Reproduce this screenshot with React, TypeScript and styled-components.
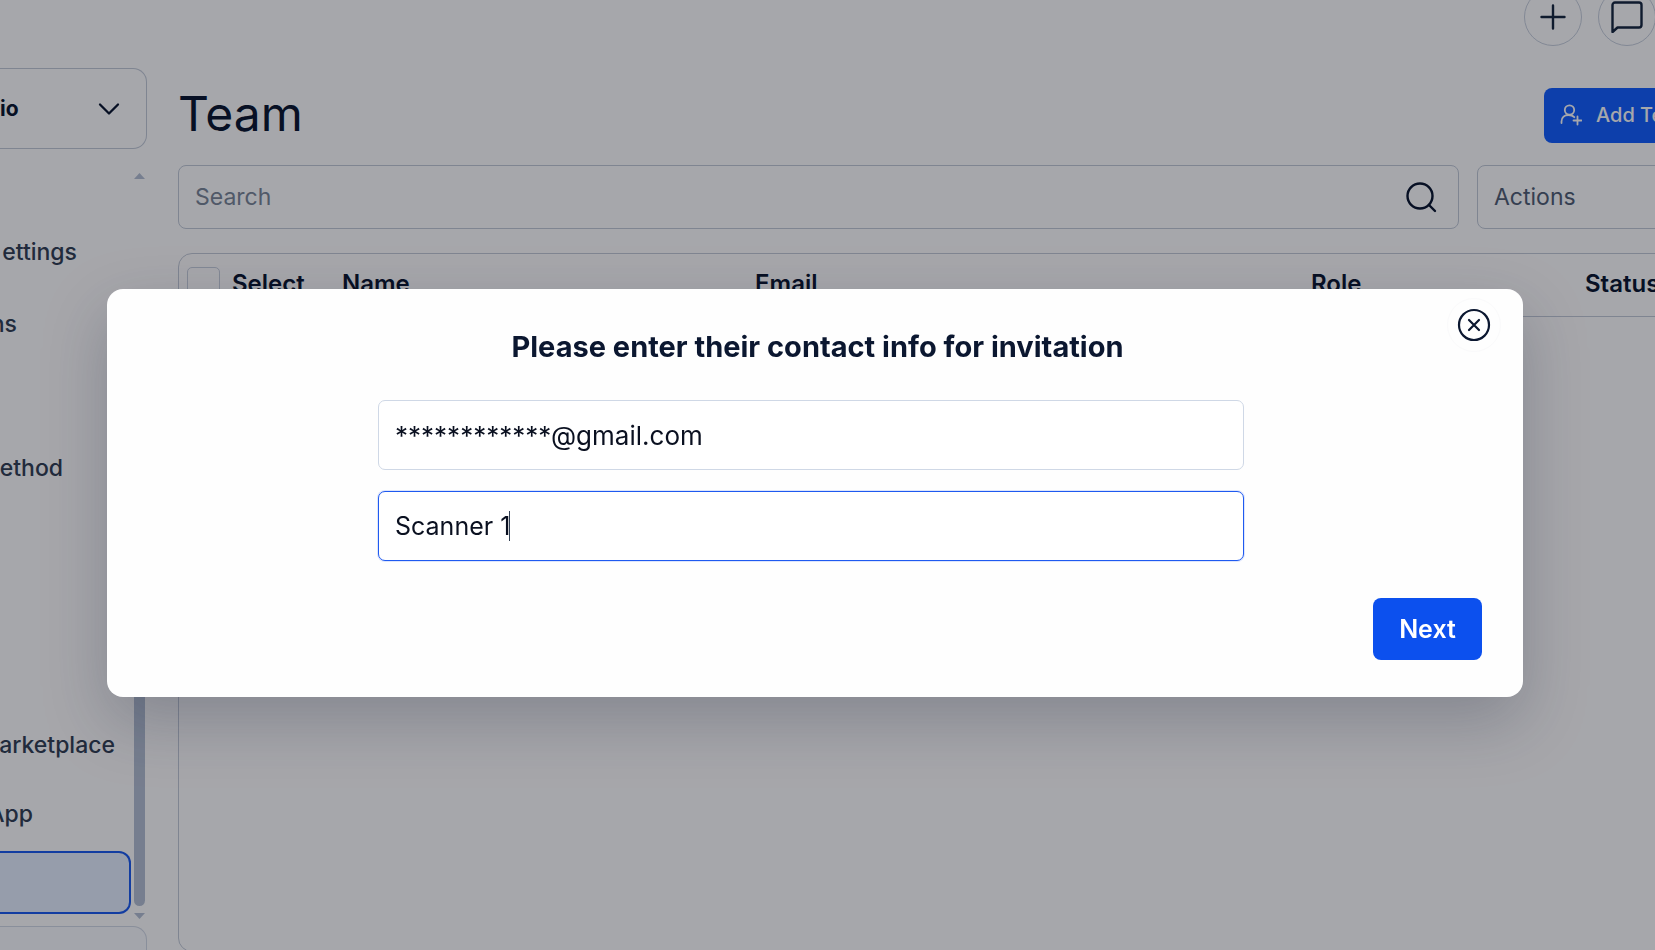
import React, { useState } from "react";
import styled, { createGlobalStyle } from "styled-components";

const GlobalStyle = createGlobalStyle`
  * { box-sizing: border-box; }
  body {
    margin: 0;
    overflow: hidden;
    background: #ffffff;
    color: #0b1730;
    font-family: Inter, "Liberation Sans", sans-serif;
  }
  button, input, select { font: inherit; color: inherit; }
`;

const Page = styled.div`
  display: flex;
  gap: 31px;
  height: 100vh;
  overflow: hidden;
`;

const Sidebar = styled.aside`
  flex: none;
  display: flex;
  flex-direction: column;
  width: 147px;
  padding-top: 68px;
`;

const AccountButton = styled.button`
  flex: none;
  display: flex;
  align-items: center;
  justify-content: space-between;
  height: 81px;
  padding: 0 26px 0 0;
  border: 1px solid #c3cbd8;
  border-width: 1px 1px 1px 0;
  border-radius: 0 14px 14px 0;
  background: transparent;
  font-size: 21px;
  font-weight: 700;
`;

const NavArea = styled.div`
  flex: 1;
  display: flex;
  min-height: 0;
  justify-content: space-between;
  padding: 24px 2px 7px 0;
`;

const Nav = styled.nav`
  width: 131px;
  padding-top: 43px;
`;

const NavGroup = styled.div<{ $row: number }>`
  display: grid;
  grid-auto-rows: ${(p) => p.$row}px;
  align-items: center;
  margin-bottom: -1px;
`;

const NavLink = styled.a<{ $end: number }>`
  display: flex;
  justify-content: flex-end;
  width: ${(p) => p.$end}px;
  color: #334155;
  font-size: 23px;
  font-weight: 500;
  text-decoration: none;
`;

const ActiveLink = styled.a`
  display: block;
  height: 63px;
  border: 2px solid #1d5cf0;
  border-left: 0;
  border-radius: 0 12px 12px 0;
  background: #e6f0ff;
`;

const ScrollTrack = styled.div`
  display: flex;
  flex-direction: column;
  align-items: center;
  gap: 7px;
  width: 11px;
`;

const ScrollThumb = styled.div`
  flex: 1;
  width: 11px;
  margin-top: 220px;
  border-radius: 6px;
  background: #b5c1d4;
`;

const SidebarFooter = styled.div`
  flex: none;
  height: 24px;
  border: 1px solid #d3dae6;
  border-width: 1px 1px 0 0;
  border-radius: 0 14px 0 0;
  background: #fbfcff;
`;

const Main = styled.main`
  flex: 1;
  display: flex;
  flex-direction: column;
  min-width: 0;
`;

const TopBar = styled.div`
  flex: none;
  display: flex;
  justify-content: flex-end;
  align-items: flex-end;
  gap: 16px;
  height: 46px;
  margin-right: -1px;
`;

const RoundButton = styled.button`
  display: grid;
  place-items: center;
  width: 58px;
  height: 58px;
  padding: 0;
  border: 1px solid #c8d0dd;
  border-radius: 50%;
  background: transparent;
  color: #182840;
`;

const HeadingRow = styled.div`
  display: flex;
  justify-content: space-between;
  align-items: center;
  margin: 42px -48px 22px 0;
`;

const Heading = styled.h1`
  margin: 0;
  padding-bottom: 3px;
  font-size: 48px;
  line-height: 52px;
  font-weight: 400;
`;

const AddButton = styled.button`
  display: flex;
  align-items: center;
  gap: 14px;
  width: 159px;
  height: 55px;
  padding: 0 16px 2px;
  border: 0;
  border-radius: 8px;
  background: #1560ff;
  color: #ffffff;
  font-size: 20px;
  font-weight: 500;
  white-space: nowrap;
`;

const FilterRow = styled.div`
  display: flex;
  gap: 18px;
  margin: 0 -48px 24px 0;
`;

const SearchBox = styled.label`
  flex: 1;
  display: flex;
  align-items: center;
  height: 64px;
  padding: 0 20px 0 16px;
  border: 1px solid #c3cbd8;
  border-radius: 8px;
`;

const SearchInput = styled.input`
  flex: 1;
  min-width: 0;
  padding: 0;
  border: 0;
  outline: 0;
  background: transparent;
  font-size: 23px;
  &::placeholder { color: #7b8799; opacity: 1; }
`;

const ActionsSelect = styled.select`
  appearance: none;
  width: 226px;
  height: 64px;
  padding: 0 16px;
  border: 1px solid #c3cbd8;
  border-radius: 8px;
  background: transparent;
  color: #526075;
  font-size: 23px;
`;

const TableCard = styled.div`
  flex: 1;
  margin: 0 -48px -2px 0;
  border: 1px solid #c3cbd8;
  border-radius: 14px;
`;

const Table = styled.table`
  width: 100%;
  table-layout: fixed;
  border-collapse: collapse;
`;

const Th = styled.th<{ $w?: number }>`
  width: ${(p) => (p.$w ? `${p.$w}px` : "auto")};
  height: 62px;
  padding: 0 0 3px;
  border-bottom: 1px solid #c3cbd8;
  text-align: left;
  font-size: 24px;
  font-weight: 600;
`;

const SelectAll = styled.label`
  display: flex;
  align-items: center;
  gap: 12px;
  padding-left: 8px;
`;

const Checkbox = styled.input`
  appearance: none;
  width: 33px;
  height: 33px;
  margin: 0;
  border: 1px solid #c8d0dd;
  border-radius: 5px;
`;

const Overlay = styled.div`
  position: fixed;
  inset: 0;
  display: flex;
  align-items: flex-start;
  padding: 289px 132px 0 107px;
  background: rgba(0, 4, 14, 0.35);
`;

const Dialog = styled.section`
  position: relative;
  flex: 1;
  display: flex;
  flex-direction: column;
  align-items: center;
  padding: 38px 41px 36px;
  border-radius: 16px;
  background: #fefefe;
  box-shadow: 0 24px 64px rgba(30, 41, 59, 0.25);
`;

const DialogTitle = styled.h2`
  margin: 0 0 33px 5px;
  font-size: 29px;
  line-height: 40px;
  font-weight: 700;
`;

const Field = styled.div`
  position: relative;
  width: 65%;
  max-width: 866px;
  margin: 0 8px 21px 0;
`;

const FieldInput = styled.input<{ $active?: boolean; $size: number }>`
  display: block;
  width: 100%;
  height: 70px;
  padding: 0 16px;
  border: 1px solid ${(p) => (p.$active ? "#1f5af0" : "#cfd8e6")};
  border-radius: 7px;
  outline: 0;
  background: #ffffff;
  box-shadow: ${(p) => (p.$active ? "0 0 0 1px rgba(31, 90, 240, 0.15)" : "none")};
  font-size: ${(p) => p.$size}px;
  color: #0a1020;
`;

const Caret = styled.span`
  position: absolute;
  top: 20px;
  left: 131px;
  width: 1px;
  height: 30px;
  background: #334155;
`;

const NextButton = styled.button`
  align-self: flex-end;
  width: 109px;
  height: 62px;
  margin: 16px 0 1px;
  padding: 0;
  border: 0;
  border-radius: 8px;
  background: #0c50ee;
  color: #ffffff;
  font-size: 25px;
  font-weight: 600;
`;

const CloseButton = styled.button`
  position: absolute;
  top: 9px;
  right: 22px;
  display: grid;
  place-items: center;
  width: 54px;
  height: 54px;
  padding: 0;
  border: 1px solid #fafafb;
  border-radius: 50%;
  background: transparent;
`;

type IconProps = { w: number; h: number; stroke?: number; children: React.ReactNode };

const Icon = ({ w, h, stroke = 2, children }: IconProps) => (
  <svg width={w} height={h} viewBox={`0 0 ${w} ${h}`} fill="none" stroke="currentColor"
    strokeWidth={stroke} strokeLinecap="round" strokeLinejoin="round" aria-hidden="true">
    {children}
  </svg>
);

export default function App() {
  const [email, setEmail] = useState("************@gmail.com");
  const [name, setName] = useState("Scanner 1");

  return (
    <>
      <GlobalStyle />
      <Page>
        <Sidebar>
          <AccountButton>
            io
            <Icon w={22} h={14} stroke={2.3}><path d="M2 2.5 11 11.5 20 2.5" /></Icon>
          </AccountButton>
          <NavArea>
            <Nav>
              <NavGroup $row={72}>
                <NavLink href="#settings" $end={77}>ettings</NavLink>
                <NavLink href="#ns" $end={17}>ns</NavLink>
                <span />
                <NavLink href="#method" $end={63}>ethod</NavLink>
              </NavGroup>
              <NavGroup $row={69}>
                <span />
                <span />
                <span />
                <NavLink href="#marketplace" $end={115}>arketplace</NavLink>
                <NavLink href="#app" $end={33}>App</NavLink>
                <ActiveLink href="#team" aria-label="Team" />
              </NavGroup>
            </Nav>
            <ScrollTrack>
              <svg width="11" height="6" viewBox="0 0 11 6" fill="#b5c1d4" aria-hidden="true"><path d="M5.5 0 11 6H0z" /></svg>
              <ScrollThumb />
              <svg width="11" height="6" viewBox="0 0 11 6" fill="#b5c1d4" aria-hidden="true"><path d="M0 0h11L5.5 6z" /></svg>
            </ScrollTrack>
          </NavArea>
          <SidebarFooter />
        </Sidebar>

        <Main>
          <TopBar>
            <RoundButton aria-label="Add">
              <Icon w={26} h={26} stroke={2.4}><path d="M13 1.5v23M1.5 13h23" /></Icon>
            </RoundButton>
            <RoundButton aria-label="Messages">
              <Icon w={32} h={32} stroke={2.4}>
                <path d="M4 1.500H28a2.500 2.500 0 0 1 2.500 2.500v20a2.500 2.500 0 0 1-2.500 2.500H6.500L1.500 31V4A2.500 2.500 0 0 1 4 1.500z" />
              </Icon>
            </RoundButton>
          </TopBar>
          <HeadingRow>
            <Heading>Team</Heading>
            <AddButton>
              <Icon w={22} h={22} stroke={1.8}>
                <circle cx="9.500" cy="6" r="4.700" />
                <path d="M1.500 19v-1.500c0-4 3-6.500 7-6.500 2.500 0 4.500.8 5.800 2.200M17.500 12.500v8M13.500 16.500h8" />
              </Icon>
              Add Te
            </AddButton>
          </HeadingRow>
          <FilterRow>
            <SearchBox>
              <SearchInput type="search" placeholder="Search" aria-label="Search" />
              <Icon w={34} h={34} stroke={2.4}>
                <circle cx="16" cy="16" r="12.500" />
                <path d="m25 25 6 6" />
              </Icon>
            </SearchBox>
            <ActionsSelect aria-label="Actions">
              <option>Actions</option>
            </ActionsSelect>
          </FilterRow>
          <TableCard>
            <Table>
              <thead>
                <tr>
                  <Th $w={163}>
                    <SelectAll><Checkbox type="checkbox" />Select</SelectAll>
                  </Th>
                  <Th $w={413}>Name</Th>
                  <Th $w={556}>Email</Th>
                  <Th $w={274}>Role</Th>
                  <Th>Status</Th>
                </tr>
              </thead>
            </Table>
          </TableCard>
        </Main>
      </Page>

      <Overlay>
        <Dialog role="dialog" aria-modal="true" aria-labelledby="invite-title">
          <CloseButton aria-label="Close">
            <Icon w={34} h={34} stroke={2.2}>
              <circle cx="17" cy="17" r="15" />
              <path d="m12 12 10 10M22 12 12 22" />
            </Icon>
          </CloseButton>
          <DialogTitle id="invite-title">Please enter their contact info for invitation</DialogTitle>
          <Field>
            <FieldInput $size={26} aria-label="Email" value={email} onChange={(e) => setEmail(e.target.value)} />
          </Field>
          <Field>
            <FieldInput $active $size={25} aria-label="Name" value={name} onChange={(e) => setName(e.target.value)} />
            <Caret />
          </Field>
          <NextButton>Next</NextButton>
        </Dialog>
      </Overlay>
    </>
  );
}
